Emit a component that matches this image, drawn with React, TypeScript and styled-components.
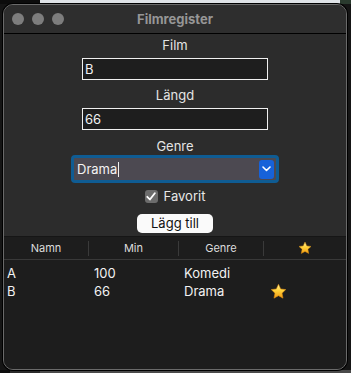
import React, { useState } from "react";
import styled, { createGlobalStyle } from "styled-components";

const GlobalStyle = createGlobalStyle`
  html, body {
    margin: 0;
    padding: 0;
  }
  body {
    width: 351px;
    height: 373px;
    overflow: hidden;
    background:
      linear-gradient(to right, #0c0c0c 0 40px, #dfe3e7 40px 340px, #2a3a2e 340px) top / 100% 4px no-repeat,
      linear-gradient(to right, #0c0c0c 0 10px, #2a2a2a 10px 40px, #4a4a4a 40px) bottom / 100% 3px no-repeat,
      #151515;
    font-family: Inter, "Liberation Sans", "Noto Sans", sans-serif;
    -webkit-font-smoothing: antialiased;
  }
`;

const Window = styled.div`
  margin: 4px 0 0 3px;
  width: 344px;
  height: 366px;
  box-sizing: border-box;
  border: 1px solid #6a6a6a;
  border-radius: 10px;
  background: #2c2c2c;
  overflow: hidden;
  display: flex;
  flex-direction: column;
  box-shadow: 0 0 0 1px #000;
`;

const TitleBar = styled.div`
  height: 28px;
  flex-shrink: 0;
  display: flex;
  align-items: center;
  position: relative;
  background: #2e2e2e;
  border-bottom: 1px solid #000;
  padding-left: 8px;
  gap: 8px;
`;

const Light = styled.span`
  width: 12px;
  height: 12px;
  border-radius: 50%;
  background: #7d7d7d;
`;

const Title = styled.div`
  position: absolute;
  left: 0;
  right: 0;
  text-align: center;
  font-size: 13px;
  font-weight: 700;
  color: #969696;
  pointer-events: none;
`;

const Form = styled.div`
  display: flex;
  flex-direction: column;
  align-items: center;
  padding-top: 3px;
`;

const Label = styled.div<{ $top: number }>`
  margin-top: ${(p) => p.$top}px;
  height: 16px;
  line-height: 16px;
  font-size: 13px;
  color: #e4e4e4;
`;

const TextInput = styled.input`
  margin-top: 5px;
  width: 186px;
  height: 22px;
  box-sizing: border-box;
  border: 1px solid #f0f0f0;
  background: #1e1e1e;
  color: #f2f2f2;
  font: inherit;
  font-size: 13px;
  padding: 0 2px;
  outline: none;
`;

const SelectRing = styled.div`
  margin-top: 1px;
  width: 208px;
  height: 28px;
  box-sizing: border-box;
  border: 3px solid #0f5c93;
  border-radius: 4px;
  background: #4c4951;
  display: flex;
  align-items: center;
  padding-left: 3px;
  padding-right: 2px;
`;

const SelectText = styled.div`
  flex: 1;
  font-size: 13px;
  color: #f4f4f4;
  display: flex;
  align-items: center;
`;

const Caret = styled.span`
  display: inline-block;
  width: 1px;
  height: 15px;
  background: #f0f0f0;
  margin-left: 1px;
`;

const SelectButton = styled.div`
  width: 15px;
  height: 19px;
  border-radius: 3px;
  background: #1762d9;
  display: flex;
  align-items: center;
  justify-content: center;
`;

const CheckRow = styled.label`
  margin-top: 6px;
  height: 14px;
  display: flex;
  align-items: center;
  gap: 6px;
  font-size: 13px;
  color: #e8e8e8;
`;

const CheckBox = styled.span`
  width: 13px;
  height: 13px;
  border-radius: 3px;
  background: #6c6c6c;
  display: flex;
  align-items: center;
  justify-content: center;
`;

const AddButton = styled.button`
  margin-top: 11px;
  width: 76px;
  height: 19px;
  border: none;
  border-radius: 5px;
  background: #fafafa;
  color: #111;
  font: inherit;
  font-size: 13px;
  line-height: 19px;
  padding: 0;
`;

const Table = styled.div`
  margin-top: 3px;
  flex: 1;
  background: #1d1d1d;
  border-top: 1px solid #161616;
`;

const Header = styled.div`
  display: grid;
  grid-template-columns: 85px 90px 85px 1fr;
  height: 22px;
  border-bottom: 1px solid #393939;
  align-items: center;
`;

const HeadCell = styled.div<{ $last?: boolean }>`
  height: 15px;
  display: flex;
  align-items: center;
  justify-content: center;
  font-size: 11px;
  color: #dcdcdc;
  border-right: ${(p) => (p.$last ? "none" : "1px solid #3a3a3a")};
`;

const Rows = styled.div`
  padding-top: 4px;
`;

const Row = styled.div`
  display: grid;
  grid-template-columns: 85px 90px 85px 1fr;
  height: 18px;
  align-items: center;
  font-size: 13px;
  color: #f2f2f2;
`;

const Cell = styled.div<{ $pad: number }>`
  padding-left: ${(p) => p.$pad}px;
  display: flex;
  align-items: center;
`;

const Star = ({ size }: { size: number }) => (
  <svg width={size} height={size} viewBox="0 0 24 24">
    <defs>
      <linearGradient id={`sg${size}`} x1="0" y1="0" x2="0" y2="1">
        <stop offset="0" stopColor="#fff3a0" />
        <stop offset="0.45" stopColor="#ffd23a" />
        <stop offset="1" stopColor="#f29a12" />
      </linearGradient>
    </defs>
    <path
      d="M12 1.8l3.1 6.6 7.2.9-5.3 5 1.4 7.1L12 17.9l-6.4 3.5 1.4-7.1-5.3-5 7.2-.9z"
      fill={`url(#sg${size})`}
      stroke="#d98a10"
      strokeWidth="0.8"
      strokeLinejoin="round"
    />
  </svg>
);

type Film = { name: string; min: number; genre: string; fav: boolean };

const films: Film[] = [
  { name: "A", min: 100, genre: "Komedi", fav: false },
  { name: "B", min: 66, genre: "Drama", fav: true },
];

export default function App() {
  const [film, setFilm] = useState("B");
  const [len, setLen] = useState("66");
  return (
    <>
      <GlobalStyle />
      <Window>
        <TitleBar>
          <Light />
          <Light />
          <Light />
          <Title>Filmregister</Title>
        </TitleBar>
        <Form>
          <Label $top={0}>Film</Label>
          <TextInput value={film} onChange={(e) => setFilm(e.target.value)} />
          <Label $top={7}>Längd</Label>
          <TextInput value={len} onChange={(e) => setLen(e.target.value)} />
          <Label $top={8}>Genre</Label>
          <SelectRing>
            <SelectText>
              Drama
              <Caret />
            </SelectText>
            <SelectButton>
              <svg width="9" height="6" viewBox="0 0 9 6">
                <path d="M1 1l3.5 3.5L8 1" fill="none" stroke="#fff" strokeWidth="1.6" strokeLinecap="round" strokeLinejoin="round" />
              </svg>
            </SelectButton>
          </SelectRing>
          <CheckRow>
            <CheckBox>
              <svg width="10" height="9" viewBox="0 0 10 9">
                <path d="M1.3 4.8l2.6 2.7L8.8 1.2" fill="none" stroke="#fff" strokeWidth="1.8" strokeLinecap="round" strokeLinejoin="round" />
              </svg>
            </CheckBox>
            Favorit
          </CheckRow>
          <AddButton>Lägg till</AddButton>
        </Form>
        <Table>
          <Header>
            <HeadCell>Namn</HeadCell>
            <HeadCell>Min</HeadCell>
            <HeadCell>Genre</HeadCell>
            <HeadCell $last>
              <Star size={14} />
            </HeadCell>
          </Header>
          <Rows>
            {films.map((f) => (
              <Row key={f.name}>
                <Cell $pad={3}>{f.name}</Cell>
                <Cell $pad={5}>{f.min}</Cell>
                <Cell $pad={5}>{f.genre}</Cell>
                <Cell $pad={6}>{f.fav && <Star size={17} />}</Cell>
              </Row>
            ))}
          </Rows>
        </Table>
      </Window>
    </>
  );
}
